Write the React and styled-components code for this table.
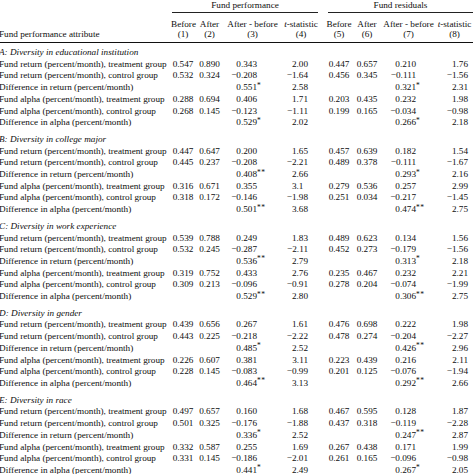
import React from 'react';
import styled, { createGlobalStyle } from 'styled-components';

const GlobalStyle = createGlobalStyle`
  html, body {
    margin: 0;
    padding: 0;
    background: #fff;
  }
  body {
    font-family: "Liberation Serif", "Times New Roman", serif;
    color: #0e0e0e;
  }
`;

// label + 8 data columns, measured off the reference
const COLUMNS = '172px 24px 29px 57px 44px 28px 28px 55px 37px';

// how each data column lines up its values
const colSpec = [
  { align: 'center', pad: 0 },
  { align: 'center', pad: 0 },
  { align: 'right', pad: 24, decimals: 3 },
  { align: 'right', pad: 17, decimals: 2 },
  { align: 'center', pad: 0 },
  { align: 'center', pad: 0 },
  { align: 'right', pad: 20, decimals: 3 },
  { align: 'right', pad: 5, decimals: 2 },
];

const headers = [
  ['Before', '(1)'],
  ['After', '(2)'],
  ['After - before', '(3)'],
  [<i key="t">t</i>, '-statistic', '(4)'],
  ['Before', '(5)'],
  ['After', '(6)'],
  ['After - before', '(7)'],
  [<i key="t">t</i>, '-statistic', '(8)'],
];

const ROW_LABELS = [
  'Fund return (percent/month), treatment group',
  'Fund return (percent/month), control group',
  'Difference in return (percent/month)',
  'Fund alpha (percent/month), treatment group',
  'Fund alpha (percent/month), control group',
  'Difference in alpha (percent/month)',
];

const sections = [
  {
    title: 'A: Diversity in educational institution',
    rows: [
      ['0.547', '0.890', '0.343', '2.00', '0.447', '0.657', '0.210', '1.76'],
      ['0.532', '0.324', '-0.208', '-1.64', '0.456', '0.345', '-0.111', '-1.56'],
      ['', '', '0.551*', '2.58', '', '', '0.321*', '2.31'],
      ['0.288', '0.694', '0.406', '1.71', '0.203', '0.435', '0.232', '1.98'],
      ['0.268', '0.145', '-0.123', '-1.11', '0.199', '0.165', '-0.034', '-0.98'],
      ['', '', '0.529*', '2.02', '', '', '0.266*', '2.18'],
    ],
  },
  {
    title: 'B: Diversity in college major',
    rows: [
      ['0.447', '0.647', '0.200', '1.65', '0.457', '0.639', '0.182', '1.54'],
      ['0.445', '0.237', '-0.208', '-2.21', '0.489', '0.378', '-0.111', '-1.67'],
      ['', '', '0.408**', '2.66', '', '', '0.293*', '2.16'],
      ['0.316', '0.671', '0.355', '3.1', '0.279', '0.536', '0.257', '2.99'],
      ['0.318', '0.172', '-0.146', '-1.98', '0.251', '0.034', '-0.217', '-1.45'],
      ['', '', '0.501**', '3.68', '', '', '0.474**', '2.75'],
    ],
  },
  {
    title: 'C: Diversity in work experience',
    rows: [
      ['0.539', '0.788', '0.249', '1.83', '0.489', '0.623', '0.134', '1.56'],
      ['0.532', '0.245', '-0.287', '-2.11', '0.452', '0.273', '-0.179', '-1.56'],
      ['', '', '0.536**', '2.79', '', '', '0.313*', '2.18'],
      ['0.319', '0.752', '0.433', '2.76', '0.235', '0.467', '0.232', '2.21'],
      ['0.309', '0.213', '-0.096', '-0.91', '0.278', '0.204', '-0.074', '-1.99'],
      ['', '', '0.529**', '2.80', '', '', '0.306**', '2.75'],
    ],
  },
  {
    title: 'D: Diversity in gender',
    rows: [
      ['0.439', '0.656', '0.267', '1.61', '0.476', '0.698', '0.222', '1.98'],
      ['0.443', '0.225', '-0.218', '-2.22', '0.478', '0.274', '-0.204', '-2.27'],
      ['', '', '0.485*', '2.52', '', '', '0.426**', '2.96'],
      ['0.226', '0.607', '0.381', '3.11', '0.223', '0.439', '0.216', '2.11'],
      ['0.228', '0.145', '-0.083', '-0.99', '0.201', '0.125', '-0.076', '-1.94'],
      ['', '', '0.464**', '3.13', '', '', '0.292**', '2.66'],
    ],
  },
  {
    title: 'E: Diversity in race',
    rows: [
      ['0.497', '0.657', '0.160', '1.68', '0.467', '0.595', '0.128', '1.87'],
      ['0.501', '0.325', '-0.176', '-1.88', '0.437', '0.318', '-0.119', '-2.28'],
      ['', '', '0.336*', '2.52', '', '', '0.247**', '2.87'],
      ['0.332', '0.587', '0.255', '1.69', '0.267', '0.438', '0.171', '1.99'],
      ['0.331', '0.145', '-0.186', '-2.01', '0.261', '0.165', '-0.096', '-0.98'],
      ['', '', '0.441*', '2.49', '', '', '0.267*', '2.05'],
    ],
  },
];

function Value({ raw, spec }) {
  if (!raw) return null;
  const stars = (raw.match(/\*+$/) || [''])[0];
  const num = raw.slice(0, raw.length - stars.length).replace('-', '\u2212');
  // keep decimal points in line when a value is printed short (e.g. "3.1")
  const dec = num.includes('.') ? num.split('.')[1].length : 0;
  const missing = spec.decimals ? Math.max(0, spec.decimals - dec) : 0;
  return (
    <>
      {num}
      {missing > 0 && <Hidden>{'0'.repeat(missing)}</Hidden>}
      {stars && <Star>{stars}</Star>}
    </>
  );
}

export default function App() {
  return (
    <>
      <GlobalStyle />
      <Table>
        <GroupRow>
          <Group $from={2} $to={6} $cut={7}>Fund performance</Group>
          <Group $from={6} $to={10} $lead={3}>Fund residuals</Group>
        </GroupRow>
        <HeadRow>
          <HeadLabel>Fund performance attribute</HeadLabel>
          {headers.map((h, i) => (
            <HeadCell key={i} $shift={i === 3 ? 4 : 0}>
              {h.slice(0, -1)}
              <br />
              {h[h.length - 1]}
            </HeadCell>
          ))}
        </HeadRow>
        {sections.map((s, si) => (
          <Section key={s.title} $first={si === 0}>
            <SectionTitle>{s.title}</SectionTitle>
            {s.rows.map((r, ri) => (
              <Row key={ri}>
                <Label>{ROW_LABELS[ri]}</Label>
                {r.map((v, ci) => (
                  <Cell key={ci} $align={colSpec[ci].align} $pad={colSpec[ci].pad}>
                    <Value raw={v} spec={colSpec[ci]} />
                  </Cell>
                ))}
              </Row>
            ))}
          </Section>
        ))}
      </Table>
    </>
  );
}

const Table = styled.div`
  width: 474px;
  height: 474px;
  overflow: hidden;
  font-size: 9.2px;
  margin-left: -1px;
`;

const GroupRow = styled.div`
  display: grid;
  grid-template-columns: ${COLUMNS};
  line-height: 10px;
`;

const Group = styled.div`
  grid-column: ${(p) => p.$from} / ${(p) => p.$to};
  text-align: center;
  padding-bottom: 2px;
  border-bottom: 1px solid #222;
  margin-left: ${(p) => p.$lead || 1}px;
  margin-right: ${(p) => p.$cut || 0}px;
`;

const HeadRow = styled.div`
  display: grid;
  grid-template-columns: ${COLUMNS};
  line-height: 10px;
  margin-top: 6px;
  padding-bottom: 3px;
  border-bottom: 1px solid #111;
`;

const HeadLabel = styled.div`
  align-self: end;
  white-space: nowrap;
`;

const HeadCell = styled.div`
  text-align: center;
  white-space: nowrap;
  padding-right: ${(p) => p.$shift}px;
`;

const Section = styled.div`
  margin-top: ${(p) => (p.$first ? 4 : 5)}px;
`;

const SectionTitle = styled.div`
  font-style: italic;
  line-height: 11.7px;
  white-space: nowrap;
`;

const Row = styled.div`
  display: grid;
  grid-template-columns: ${COLUMNS};
  line-height: 11.7px;
`;

const Label = styled.div`
  white-space: nowrap;
`;

const Cell = styled.div`
  text-align: ${(p) => p.$align};
  padding-right: ${(p) => p.$pad}px;
  white-space: nowrap;
`;

const Hidden = styled.span`
  visibility: hidden;
`;

const Star = styled.span`
  display: inline-block;
  width: 0;
  overflow: visible;
  font-size: 7.5px;
  vertical-align: 2.5px;
  line-height: 0;
  letter-spacing: 0.6px;
`;
